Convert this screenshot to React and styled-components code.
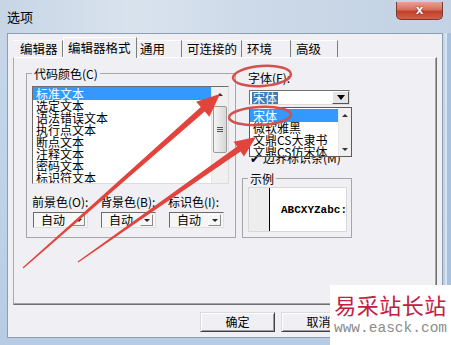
import React from "react";
import styled, { createGlobalStyle } from "styled-components";

const GlobalStyle = createGlobalStyle`
  body {
    margin: 0;
    font-family: "Noto Sans CJK SC", "Liberation Sans", sans-serif;
    color: #000;
  }
`;

const Window = styled.div`
  position: relative;
  width: 451px;
  height: 345px;
  display: flex;
  flex-direction: column;
  overflow: hidden;
  background: linear-gradient(180deg, #c9d7e7 0%, #c0d3e8 45%, #b7cce4 100%);
  box-shadow: inset -4px 0 #a9c1dd, inset -6px 0 #d6e3f1;
`;

const TitleBar = styled.div`
  height: 33px;
  flex: 0 0 33px;
  display: flex;
  justify-content: space-between;
  align-items: flex-start;
  padding: 0 8px 0 7px;
  box-sizing: border-box;
  background: linear-gradient(90deg, #c7d5e5 0%, #d9e3ee 30%, #cbd8e7 60%, #c3d3e5 100%);
`;

const Title = styled.span`
  margin-top: 10px;
  font-size: 13px;
  line-height: 14px;
`;

const CloseButton = styled.div`
  margin-top: 2px;
  width: 47px;
  height: 18px;
  box-sizing: border-box;
  border: 1px solid #7a3a32;
  border-top: none;
  border-radius: 0 0 5px 5px;
  background: linear-gradient(180deg, #e8a191 0%, #d6705d 45%, #c2412b 55%, #d06048 100%);
  color: #fff;
  font: bold 13px/16px "Liberation Sans", sans-serif;
  text-align: center;
  text-shadow: 0 0 2px #6b1d12;
`;

const Frame = styled.div`
  flex: 1;
  display: flex;
  padding: 0 8px 7px 7px;
`;

const Client = styled.div`
  flex: 1;
  display: flex;
  flex-direction: column;
  background: #f0eff3;
  border: 1px solid #8d9db2;
  padding: 3px 0 0 5px;
`;

const TabStrip = styled.div`
  height: 20px;
  display: flex;
  align-items: flex-end;
`;

const Tab = styled.div`
  position: relative;
  width: ${(p) => p.$w}px;
  height: ${(p) => (p.$active ? 21 : 17)}px;
  margin-bottom: ${(p) => (p.$active ? -1 : 0)}px;
  box-sizing: border-box;
  padding-left: ${(p) => p.$pad}px;
  font-size: 12.5px;
  line-height: ${(p) => (p.$active ? 19 : 16)}px;
  white-space: nowrap;
  background: #f0eff3;
  border-top: 1px solid #ffffff;
  border-left: ${(p) => (p.$active ? "1px solid #ffffff" : "none")};
  border-right: 1px solid #7d7d7d;
  z-index: ${(p) => (p.$active ? 2 : 1)};
`;

const TabPanel = styled.div`
  width: 424px;
  height: 248px;
  box-sizing: border-box;
  display: flex;
  align-items: flex-start;
  gap: 6px;
  padding: 9px 0 0 12px;
  border: 1px solid;
  border-color: #ffffff #6f6f6f #6f6f6f #a9a9a9;
  box-shadow: inset -1px -1px #a3a3a3;
`;

const Group = styled.fieldset`
  margin: ${(p) => p.$top || 0}px 0 0 0;
  width: ${(p) => p.$w}px;
  box-sizing: border-box;
  border: 1px solid #a6a6a6;
  padding: 0 ${(p) => p.$padR}px ${(p) => p.$padB}px 5px;
  min-width: 0;

  legend {
    padding: 0 2px;
    font-size: 12px;
    line-height: 13px;
  }
`;

const ListBox = styled.div`
  margin-top: 6px;
  height: 98px;
  box-sizing: border-box;
  display: flex;
  border: 1px solid;
  border-color: #6d6d6d #dcdcdc #dcdcdc #6d6d6d;
  background: #fff;
  overflow: hidden;
`;

const ListItems = styled.div`
  flex: 1;
  font-size: 12px;
  line-height: 12px;
`;

const ListItem = styled.div`
  padding-left: 3px;
  height: ${(p) => (p.$selected ? 13 : 12)}px;
  line-height: ${(p) => (p.$selected ? 13 : 12)}px;
  background: ${(p) => (p.$selected ? "#3399ff" : "transparent")};
  color: ${(p) => (p.$selected ? "#fff" : "#000")};
  white-space: nowrap;
`;

const ScrollBar = styled.div`
  width: ${(p) => p.$w}px;
  display: flex;
  flex-direction: column;
  justify-content: ${(p) => (p.$ends ? "space-between" : "flex-start")};
  background: #f0f0f0;
  border-left: 1px solid #e6e6e6;
`;

const ScrollArrow = styled.div`
  height: ${(p) => p.$h}px;
  display: flex;
  align-items: center;
  justify-content: center;

  &::after {
    content: "";
    border-left: 3px solid transparent;
    border-right: 3px solid transparent;
    ${(p) => (p.$down ? "border-top: 3px solid #333;" : "border-bottom: 3px solid #333;")}
  }
`;

const Thumb = styled.div`
  margin: 4px 1px 0 1px;
  height: 47px;
  box-sizing: border-box;
  border: 1px solid #9a9a9a;
  border-radius: 2px;
  background: linear-gradient(90deg, #f4f4f4 0%, #e6e6e6 50%, #d7d7d7 100%);
  display: flex;
  flex-direction: column;
  align-items: center;
  justify-content: center;
  gap: 1px;

  span {
    width: 6px;
    height: 1px;
    background: #555;
  }
`;

const ColorRow = styled.div`
  margin-top: 11px;
  display: grid;
  grid-template-columns: repeat(3, 56px);
  column-gap: 12px;
`;

const ColorField = styled.div`
  display: flex;
  flex-direction: column;
`;

const SmallLabel = styled.div`
  font-size: 12px;
  line-height: 14px;
  white-space: nowrap;
`;

const ColorSelect = styled.div`
  margin: 3px 0 0 1px;
  width: 55px;
  height: 16px;
  box-sizing: border-box;
  display: flex;
  align-items: center;
  justify-content: space-between;
  padding: 0 2px 0 7px;
  border: 1px solid;
  border-color: #6b6b6b #e0e0e0 #e0e0e0 #6b6b6b;
  background: #f6f6f6;
  font-size: 12px;
  line-height: 14px;
`;

const MiniArrow = styled.span`
  width: 13px;
  height: 12px;
  display: flex;
  align-items: center;
  justify-content: center;
  border: 1px solid;
  border-color: #ffffff #8a8a8a #8a8a8a #ffffff;
  box-sizing: border-box;

  &::after {
    content: "";
    border-left: 3px solid transparent;
    border-right: 3px solid transparent;
    border-top: 3px solid #222;
  }
`;

const RightCol = styled.div`
  width: 110px;
  display: flex;
  flex-direction: column;
`;

const FieldLabel = styled.div`
  margin: 4px 0 0 6px;
  font-size: 12px;
  line-height: 14px;
`;

const Combo = styled.div`
  position: relative;
  margin: 5px 0 0 7px;
  width: 101px;
  height: 15px;
  box-sizing: border-box;
  display: flex;
  align-items: center;
  justify-content: space-between;
  padding-left: 2px;
  border: 1px solid;
  border-color: #707070 #dcdcdc #dcdcdc #707070;
  background: #fff;
  font-size: 12px;
`;

const ComboValue = styled.span`
  background: #3f7dba;
  color: #fff;
  line-height: 12px;
  padding: 0 1px;
`;

const ComboButton = styled.div`
  width: 17px;
  height: 13px;
  box-sizing: border-box;
  display: flex;
  align-items: center;
  justify-content: center;
  background: #e4e4e4;
  border: 1px solid;
  border-color: #fff #555 #555 #fff;

  &::after {
    content: "";
    border-left: 4px solid transparent;
    border-right: 4px solid transparent;
    border-top: 5px solid #000;
  }
`;

const DropList = styled.div`
  position: absolute;
  top: 16px;
  left: -1px;
  width: 103px;
  height: 50px;
  box-sizing: border-box;
  display: flex;
  border: 1px solid #5a5a5a;
  background: #fff;
  z-index: 3;
`;

const DropItems = styled.div`
  flex: 1;
  padding-top: 1px;
  font-size: 12px;
  overflow: hidden;
`;

const CheckRow = styled.div`
  margin: 46px 0 0 8px;
  display: flex;
  gap: 3px;
  font-size: 12px;
  line-height: 14px;
  white-space: nowrap;
`;

const Preview = styled.div`
  margin-top: 2px;
  height: 45px;
  display: flex;
  background: #fff;
  border: 1px solid #d8d8d8;
  box-sizing: border-box;
`;

const Gutter = styled.div`
  width: 20px;
  background: #ededed;
  border-right: 1px solid #000;
`;

const SampleText = styled.div`
  flex: 1;
  display: flex;
  align-items: center;
  padding-left: 11px;
  overflow: hidden;
  font: bold 11px/12px "Liberation Mono", monospace;
  white-space: nowrap;
`;

const ButtonRow = styled.div`
  margin-top: 7px;
  width: 424px;
  display: flex;
  justify-content: flex-end;
  gap: 6px;
`;

const Button = styled.div`
  width: 75px;
  height: 20px;
  box-sizing: border-box;
  border: 1px solid;
  border-color: #dcdcdc #404040 #404040 #dcdcdc;
  box-shadow: inset 1px 1px #fff, inset -1px -1px #9c9c9c;
  background: #f0eff3;
  font-size: 12px;
  line-height: 18px;
  text-align: center;
`;

const Overlay = styled.svg`
  position: absolute;
  left: 0;
  top: 0;
  pointer-events: none;
  z-index: 5;
`;

const Watermark = styled.div`
  position: absolute;
  right: 0;
  bottom: 0;
  width: 121px;
  height: 60px;
  background: #fff;
  z-index: 10;
  display: flex;
  flex-direction: column;
  align-items: center;
`;

const MarkName = styled.div`
  margin-top: 5px;
  font-size: 22px;
  line-height: 28px;
  letter-spacing: 0.5px;
  color: #c2203f;
`;

const MarkUrl = styled.div`
  font: 14.5px/20px "Liberation Mono", monospace;
  color: #8c8c8c;
`;

const tabs = [
  { label: "编辑器", w: 50, pad: 7 },
  { label: "编辑器格式", w: 74, pad: 4, active: true },
  { label: "通用", w: 45, pad: 3 },
  { label: "可连接的", w: 60, pad: 5 },
  { label: "环境", w: 49, pad: 5 },
  { label: "高级", w: 47, pad: 5 },
];

const codeItems = [
  "标准文本",
  "选定文本",
  "语法错误文本",
  "执行点文本",
  "断点文本",
  "注释文本",
  "密码文本",
  "标识符文本",
];

const fonts = ["宋体", "微软雅黑", "文鼎CS大隶书", "文鼎CS仿宋体"];

const colorFields = ["前景色(O):", "背景色(B):", "标识色(I):"];

const arrowPoints = (x1, y1, x2, y2, head, half, w0, w1) => {
  const dx = x2 - x1;
  const dy = y2 - y1;
  const len = Math.hypot(dx, dy);
  const ux = dx / len;
  const uy = dy / len;
  const nx = -uy;
  const ny = ux;
  const bx = x2 - ux * head;
  const by = y2 - uy * head;
  const p = (x, y) => `${x.toFixed(1)},${y.toFixed(1)}`;
  return [
    p(x1 + nx * w0, y1 + ny * w0),
    p(bx + nx * w1, by + ny * w1),
    p(bx + nx * half, by + ny * half),
    p(x2, y2),
    p(bx - nx * half, by - ny * half),
    p(bx - nx * w1, by - ny * w1),
    p(x1 - nx * w0, y1 - ny * w0),
  ].join(" ");
};

export default function App() {
  return (
    <>
      <GlobalStyle />
      <Window>
        <TitleBar>
          <Title>选项</Title>
          <CloseButton>x</CloseButton>
        </TitleBar>
        <Frame>
          <Client>
            <TabStrip>
              {tabs.map((t) => (
                <Tab key={t.label} $w={t.w} $pad={t.pad} $active={t.active}>
                  {t.label}
                </Tab>
              ))}
            </TabStrip>
            <TabPanel>
              <Group $w={210} $padR={6} $padB={9}>
                <legend>代码颜色(C)</legend>
                <ListBox>
                  <ListItems>
                    {codeItems.map((item, i) => (
                      <ListItem key={item} $selected={i === 0}>
                        {item}
                      </ListItem>
                    ))}
                  </ListItems>
                  <ScrollBar $w={16}>
                    <ScrollArrow $h={15} />
                    <Thumb>
                      <span />
                      <span />
                      <span />
                    </Thumb>
                  </ScrollBar>
                </ListBox>
                <ColorRow>
                  {colorFields.map((label) => (
                    <ColorField key={label}>
                      <SmallLabel>{label}</SmallLabel>
                      <ColorSelect>
                        自动
                        <MiniArrow />
                      </ColorSelect>
                    </ColorField>
                  ))}
                </ColorRow>
              </Group>
              <RightCol>
                <FieldLabel>字体(F):</FieldLabel>
                <Combo>
                  <ComboValue>宋体</ComboValue>
                  <ComboButton />
                  <DropList>
                    <DropItems>
                      {fonts.map((f, i) => (
                        <ListItem key={f} $selected={i === 0}>
                          {f}
                        </ListItem>
                      ))}
                    </DropItems>
                    <ScrollBar $w={12} $ends>
                      <ScrollArrow $h={14} />
                      <ScrollArrow $h={14} $down />
                    </ScrollBar>
                  </DropList>
                </Combo>
                <CheckRow>
                  <span>✔</span>
                  <span>边界标识条(M)</span>
                </CheckRow>
                <Group $w={110} $padR={4} $padB={5} $top={7}>
                  <legend>示例</legend>
                  <Preview>
                    <Gutter />
                    <SampleText>ABCXYZabc:</SampleText>
                  </Preview>
                </Group>
              </RightCol>
            </TabPanel>
            <ButtonRow>
              <Button>确定</Button>
              <Button>取消</Button>
              <Button>帮助</Button>
            </ButtonRow>
          </Client>
        </Frame>

        <Overlay width="451" height="345" viewBox="0 0 451 345">
          <ellipse cx="262" cy="76" rx="29" ry="10" fill="none" stroke="#d4504b" strokeWidth="2.5" transform="rotate(-4 262 76)" />
          <ellipse cx="260" cy="116" rx="31" ry="9" fill="none" stroke="#d4504b" strokeWidth="2.5" transform="rotate(-3 260 116)" />
          <polygon points={arrowPoints(23, 268, 220, 94, 23, 10, 0.6, 3)} fill="#e2433c" />
          <polygon points={arrowPoints(78, 262, 256, 137, 21, 9, 0.6, 3)} fill="#e2433c" />
        </Overlay>

        <Watermark>
          <MarkName>易采站长站</MarkName>
          <MarkUrl>www.easck.com</MarkUrl>
        </Watermark>
      </Window>
    </>
  );
}
